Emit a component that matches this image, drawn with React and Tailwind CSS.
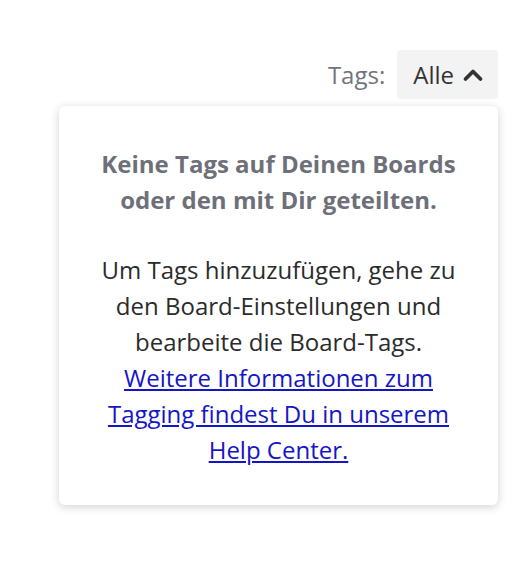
export default function App() {
  return (
    <div className="min-h-screen bg-white text-[#2b2b2b] font-['Open_Sans',sans-serif]">
      <div className="flex justify-end items-center gap-[12px] pt-[50px] pr-[32px]">
        <span className="text-[24px] text-[#71747c]">Tags:</span>
        <button className="h-[49px] pl-[16px] pr-[14px] flex items-center gap-[8px] bg-[#f3f3f3] rounded-[4px] text-[24px] text-[#333]">
          Alle
          <svg width="22" height="14" viewBox="0 0 22 14" fill="none">
            <path d="M3.5 11 L11 3.5 L18.5 11" stroke="#333" strokeWidth="3.8" strokeLinecap="round" strokeLinejoin="round" />
          </svg>
        </button>
      </div>
      <div className="ml-[59px] mt-[7px] w-[439px] rounded-[6px] bg-white shadow-[0_2px_10px_rgba(0,0,0,0.18)] px-[30px] pt-[40px] pb-[37px] text-center text-[24px] leading-[36px]">
        <p className="font-bold text-[#6e7079]">
          Keine Tags auf Deinen Boards oder den mit Dir geteilten.
        </p>
        <p className="mt-[34px]">
          Um Tags hinzuzufügen, gehe zu den Board-Einstellungen und bearbeite die Board-Tags.
        </p>
        <a href="#" className="block px-[14px] text-[#1515c8] underline">
          Weitere Informationen zum Tagging findest Du in unserem Help Center.
        </a>
      </div>
    </div>
  )
}
